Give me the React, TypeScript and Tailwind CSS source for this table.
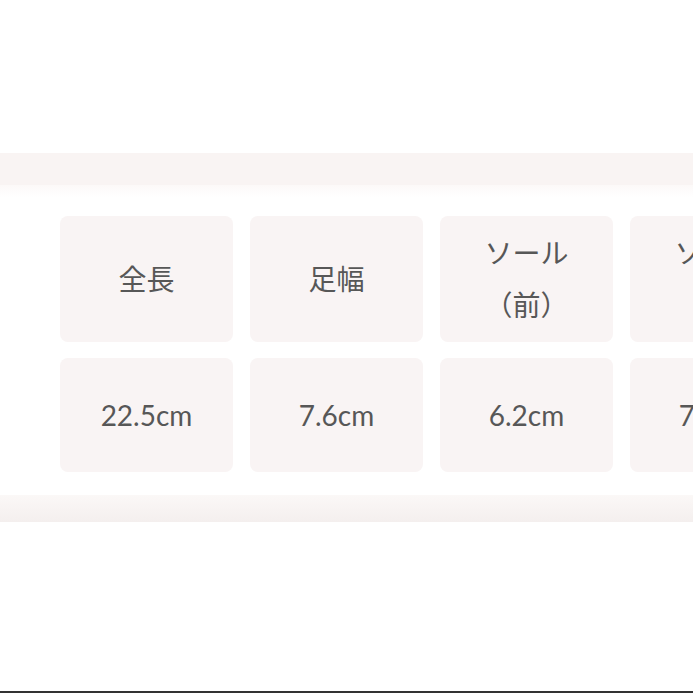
import React from "react";

const head: React.ReactNode[] = [
  "全長",
  "足幅",
  <>
    <span className="block">ソール</span>
    <span className="block">（前）</span>
  </>,
  <>
    <span className="block">ソール</span>
    <span className="block">（後）</span>
  </>,
];
const vals = ["22.5cm", "7.6cm", "6.2cm", "7.0cm"];

export default function App() {
  return (
    <div
      className="w-[693px] h-[693px] bg-white overflow-hidden flex flex-col text-[#575757]"
      style={{ fontFamily: "Lato, 'Noto Sans CJK JP', sans-serif" }}
    >
      <div className="h-[153px] shrink-0" />
      <div className="h-[32px] shrink-0 bg-[#f9f4f3]" />
      <div className="h-[12px] shrink-0 bg-gradient-to-b from-[#fcf9f8] to-white" />
      <div className="h-[19px] shrink-0" />
      <div className="flex flex-col gap-[16px] pl-[60px] shrink-0">
        <div className="flex gap-[17px]">
          {head.map((h, i) => (
            <div
              key={i}
              className="w-[173px] h-[126px] shrink-0 rounded-lg bg-[#f9f4f4] flex flex-col items-center justify-center text-[28px] leading-[52px] text-center"
            >
              {h}
            </div>
          ))}
        </div>
        <div className="flex gap-[17px]">
          {vals.map((v, i) => (
            <div
              key={i}
              className="w-[173px] h-[114px] shrink-0 rounded-lg bg-[#f9f4f4] flex items-center justify-center text-[28px]"
            >
              {v}
            </div>
          ))}
        </div>
      </div>
      <div className="h-[23px] shrink-0" />
      <div className="h-[27px] shrink-0 bg-gradient-to-b from-[#fbf8f7] to-[#f4efee]" />
      <div className="flex-1" />
      <div className="h-[2px] shrink-0 bg-[#333]" />
    </div>
  );
}
